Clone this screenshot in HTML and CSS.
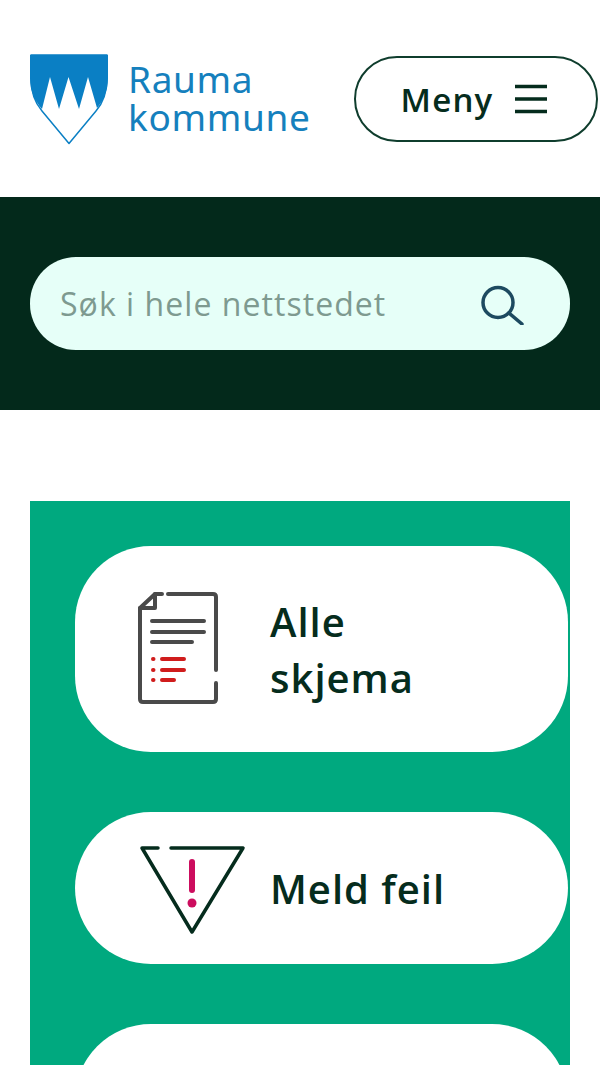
FILE: index.html
```html
<!DOCTYPE html>
<html lang="nb">
<head>
    <meta charset="UTF-8">
    <meta name="viewport" content="width=device-width, initial-scale=1.0">
    <title>Rauma kommune</title>
    <link rel="stylesheet" href="styles.css">
</head>
<body>
    <header class="site-header">
        <a class="logo" href="#">
            <svg class="logo-shield" width="80" height="92" viewBox="0 0 80 92">
                <path d="M1 1H77V24C77 38 72 50 66 57L39 89.500L12 57C6 50 1 38 1 24Z" fill="#fff" stroke="#0a7fc4" stroke-width="1.500" stroke-linejoin="round"/>
                <path d="M0 1H78V24C78 37 73 47 67 54L58 23L49 55L38.500 23L29 55L20 23L12 55C5 47 0 37 0 24Z" fill="#0a7fc4"/>
            </svg>
            <span class="logo-text">Rauma<br>kommune</span>
        </a>
        <button class="menu-button">
            <span>Meny</span>
            <svg width="34" height="30" viewBox="0 0 34 30">
                <path d="M1 2.500H33M1 15H33M1 27.500H33" stroke="#052c1d" stroke-width="3.500" fill="none"/>
            </svg>
        </button>
    </header>

    <section class="search-band">
        <div class="search-box">
            <span class="search-text">Søk i hele nettstedet</span>
            <svg width="46" height="42" viewBox="0 0 46 42">
                <circle cx="20" cy="19.500" r="15" stroke="#1d4a60" stroke-width="3.500" fill="none"/>
                <path d="M31 30L44 41" stroke="#1d4a60" stroke-width="3.500" stroke-linecap="round"/>
            </svg>
        </div>
    </section>

    <main class="shortcuts">
        <a class="shortcut shortcut-tall" href="#">
            <svg class="shortcut-icon" width="82" height="114" viewBox="0 0 82 114">
                <g fill="none" stroke="#4a4a4a" stroke-width="4" stroke-linecap="round" stroke-linejoin="round">
                    <path d="M31 2H76C78 2 79 3 79 5V78M79 91V107C79 109 78 110 76 110H6C4 110 3 109 3 107V16L18 2H25"/>
                    <path d="M3 16H18V2"/>
                    <path d="M15 29H67M15 40H67M15 50H55"/>
                </g>
                <g fill="none" stroke="#d01c1c" stroke-width="4" stroke-linecap="round">
                    <path d="M25 67H47M25 78H47M25 88H37"/>
                    <path d="M16 67H16.500M16 78H16.500M16 88H16.500"/>
                </g>
            </svg>
            <span class="shortcut-label">Alle<br>skjema</span>
        </a>
        <a class="shortcut shortcut-wide" href="#">
            <svg class="shortcut-icon" width="106" height="90" viewBox="0 0 106 90">
                <path d="M18 3H2L52 87L103 3H31" fill="none" stroke="#052c1d" stroke-width="3.500" stroke-linecap="round" stroke-linejoin="round"/>
                <path d="M52 17V45" stroke="#cc0d5e" stroke-width="6" stroke-linecap="round"/>
                <circle cx="52" cy="58" r="4.500" fill="#cc0d5e"/>
            </svg>
            <span class="shortcut-label">Meld feil</span>
        </a>
        <a class="shortcut shortcut-tall" href="#"></a>
    </main>
</body>
</html>
```

FILE: styles.css
```css
html, body {
    margin: 0;
    height: 1065px;
    overflow: hidden;
}

body {
    font-family: 'Open Sans', 'Noto Sans', sans-serif;
    background: white;
    color: #052c1d;
}

a {
    color: inherit;
    text-decoration: none;
}

.site-header {
    height: 197px;
    display: flex;
    align-items: flex-start;
    justify-content: space-between;
    padding: 54px 2px 0 30px;
    box-sizing: border-box;
}

.logo {
    display: flex;
    gap: 18px;
}

.logo-text {
    margin-top: 6px;
    font-family: 'Noto Sans', sans-serif;
    font-size: 37px;
    line-height: 38px;
    color: #1580bd;
    letter-spacing: 0.65px;
}

.menu-button {
    margin-top: 2px;
    width: 244px;
    height: 86px;
    display: flex;
    align-items: center;
    justify-content: center;
    gap: 21px;
    padding: 0 3px 0 0;
    background: white;
    border: 2px solid #0f3d2d;
    border-radius: 43px;
    font-family: inherit;
    font-size: 33px;
    font-weight: 600;
    letter-spacing: 1.2px;
    color: #052c1d;
}

.search-band {
    height: 213px;
    padding: 60px 30px 0;
    box-sizing: border-box;
    background: #03291b;
}

.search-box {
    height: 93px;
    padding: 0 46px 0 30px;
    display: flex;
    align-items: center;
    justify-content: space-between;
    background: #e6fff8;
    border-radius: 46px;
}

.search-text {
    font-size: 32px;
    font-weight: 500;
    letter-spacing: 1.05px;
    color: #7e9a90;
}

.shortcuts {
    margin: 91px 30px 0;
    padding: 45px 2px 60px 45px;
    display: flex;
    flex-direction: column;
    gap: 60px;
    background: #00a97f;
}

.shortcut {
    display: flex;
    align-items: center;
    background: white;
    border-radius: 76px;
}

.shortcut-tall {
    height: 206px;
    padding-left: 62px;
    gap: 51px;
}

.shortcut-wide {
    height: 152px;
    padding-left: 65px;
    gap: 24px;
}

.shortcut-icon {
    flex-shrink: 0;
}

.shortcut-wide .shortcut-icon {
    margin-top: 3px;
}

.shortcut-label {
    padding-top: 2px;
    font-size: 40px;
    font-weight: 600;
    line-height: 56px;
    letter-spacing: 1px;
}
```
